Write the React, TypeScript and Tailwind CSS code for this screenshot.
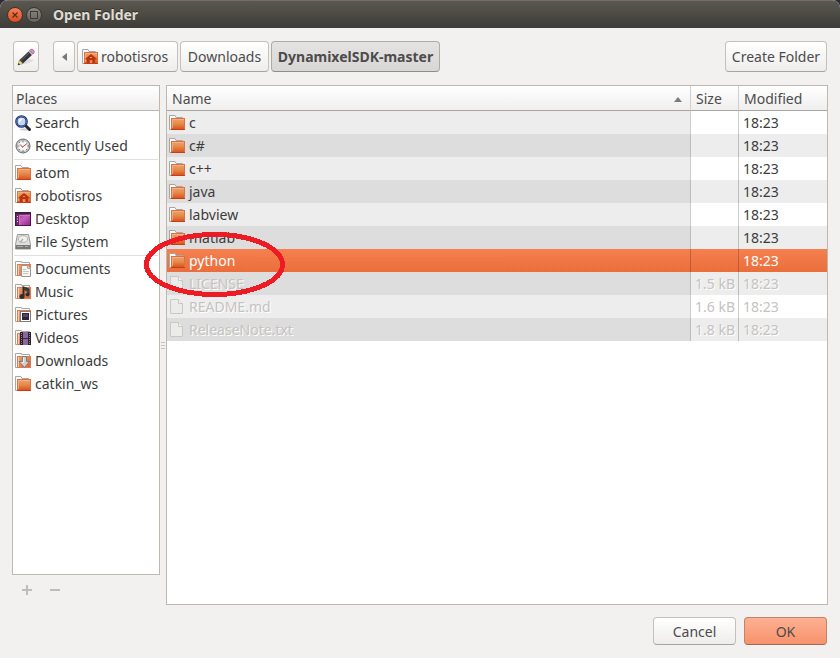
import type { ReactNode } from 'react';

type IconProps = { kind: string };

const FolderBase = ({ children }: { children?: ReactNode }) => (
  <>
    <path d="M.5 14.500V.5h5.500l1 2h6.500v3h-11v9z" fill="#fff" stroke="#a9a7a4" />
    <rect x="2.500" y="3.500" width="13" height="11" fill="url(#folderFill)" stroke="#dc7146" />
    <path d="M3.500 13V4.500H15" fill="none" stroke="#f3b88e" strokeOpacity=".7" />
    <path d="M2 14.500h14" stroke="#c43f16" />
    {children}
  </>
);

const StackBase = ({ children }: { children?: ReactNode }) => (
  <>
    <path d="M.5 14.500V.5h6v1h8v3h-10v10z" fill="#fff" stroke="#a9a7a4" />
    <rect x="2.500" y="3.500" width="13" height="11" fill="url(#stackFill)" stroke="#dc7b55" />
    <path d="M3.500 4v10" stroke="#f7cdb0" />
    {children}
  </>
);

const drawings: Record<string, ReactNode> = {
  folder: <FolderBase />,
  home: (
    <FolderBase>
      <path d="M3.500 9.500 9 5l5.500 4.500v1H13v3.500h-2.500v-3h-3v3H5v-3.500H3.500z" fill="#b93512" />
      <path d="M8 8h2v1H8zM8 11.500h2V14H8z" fill="#f0905a" />
    </FolderBase>
  ),
  search: (
    <>
      <ellipse cx="10" cy="14.500" rx="5" ry="1" fill="#ccc" />
      <path d="m10.500 10.500 4 4" stroke="#252525" strokeWidth="3" strokeLinecap="round" />
      <circle cx="6.500" cy="6.500" r="5.200" fill="#c7d4ed" stroke="#1d3277" strokeWidth="2.300" />
      <circle cx="6.500" cy="6.500" r="5.200" fill="none" stroke="#5279bf" strokeWidth=".8" />
      <path d="M4 6q0-3 4-2.500L4 8z" fill="#fff" />
    </>
  ),
  recent: (
    <>
      <circle cx="8" cy="8" r="7" fill="#d4d4d1" stroke="#666" />
      <circle cx="8" cy="8" r="5.500" fill="#f6f6f6" stroke="#aaa" strokeWidth=".8" />
      <path d="M8 2.500v2M8 12v2M2.500 8h2M12 8h2M4 4l1 1M12 12l-1-1M4 12l1-1" stroke="#777" strokeWidth=".9" />
      <path d="M7.500 9 5 6.500" stroke="#555" strokeWidth="1" />
      <path d="m7 9.500 5-4" stroke="#e23a30" strokeWidth="1" />
    </>
  ),
  desktop: (
    <>
      <rect x=".5" y="1.500" width="15" height="13" fill="url(#desktopFill)" stroke="#4b1549" />
      <path d="M1 2.500h14" stroke="#38233a" strokeWidth="2" />
      <path d="M1 4h3v10H1z" fill="#6d2b6b" />
      <path d="M2 5.500h1M2 8h1M2 10.500h1" stroke="#efd5ef" strokeWidth="1.200" />
      <path d="M4.500 4.500H15M4.500 4v10" stroke="#d777cd" strokeWidth=".8" />
    </>
  ),
  drive: (
    <>
      <path d="M2.500.5h11l2 10v4.500H.5v-4.500z" fill="#dededc" stroke="#999894" />
      <path d="M1 11h14v4H1z" fill="#777773" />
      <path d="M2 12.500h6M10 12.500h3" stroke="#a9a9a5" />
      <ellipse cx="8" cy="5" rx="4.500" ry="3.300" fill="#f1f1f0" stroke="#b5b5b1" />
      <path d="M8 5 5 8.500" stroke="#acaca8" strokeWidth="1.300" />
    </>
  ),
  documents: (
    <StackBase>
      <path d="M6.500 4.500h6l3 3v8h-9z" fill="#f5f5f3" stroke="#969692" />
      <path d="M12.500 4.500v3h3" fill="#ddd" stroke="#aaa" />
      <path d="M8 8.500h3M8 10.500h6M8 12.500h5" stroke="#c5c5c1" />
    </StackBase>
  ),
  music: (
    <StackBase>
      <path d="M8.500 12V3.500l5 2v5" fill="none" stroke="#292d2e" strokeWidth="2" />
      <path d="m9 3 5 3v3L9 6z" fill="#3c4041" />
      <circle cx="7" cy="12.500" r="2.500" fill="#2d3031" />
      <circle cx="12.500" cy="10.500" r="2" fill="#2d3031" />
    </StackBase>
  ),
  pictures: (
    <StackBase>
      <rect x="5.500" y="4.500" width="10" height="10" fill="#fff" stroke="#7d7d79" />
      <path d="M7 6h7v7H7z" fill="#30243b" />
      <path d="M8 7h5v3H8z" fill="#51466a" />
    </StackBase>
  ),
  videos: (
    <StackBase>
      <path d="M5 2h11v13H5z" fill="#29232b" />
      <path d="M8 2h5v13H8z" fill="#8a669b" />
      <path d="M8 8.500h5" stroke="#3c2b43" />
      <path d="M6.500 3v11M14.500 3v11" stroke="#8d8591" strokeDasharray="1 1" />
    </StackBase>
  ),
  downloads: (
    <StackBase>
      <path d="M7.500 3.500h4v5h3L9.500 14.500l-5.500-6h3.500z" fill="#d0d0cd" stroke="#7c7d79" />
      <path d="M8.500 4.500v5h-2" stroke="#eee" fill="none" />
    </StackBase>
  ),
  file: (
    <>
      <path d="M1.500.5h8l4 4v10h-12z" fill="#ebebea" stroke="#c9c8c6" />
      <path d="M9.500.5v4h4" fill="#f3f3f2" stroke="#c9c8c6" />
    </>
  ),
};

function Icon({ kind }: IconProps) {
  return (
    <svg className="size-4 shrink-0" viewBox="0 0 16 16" aria-hidden="true">
      {drawings[kind]}
    </svg>
  );
}

function Gradients() {
  return (
    <svg className="absolute size-0" aria-hidden="true">
      <defs>
        <linearGradient id="folderFill" x1="0" y1="0" x2="0" y2="1">
          <stop offset="0" stopColor="#eda272" />
          <stop offset=".45" stopColor="#e68d4a" />
          <stop offset="1" stopColor="#db4f1f" />
        </linearGradient>
        <linearGradient id="stackFill" x1="0" y1="0" x2="1" y2="1">
          <stop offset="0" stopColor="#f0a172" />
          <stop offset="1" stopColor="#e0602f" />
        </linearGradient>
        <linearGradient id="desktopFill" x1="0" y1="0" x2="1" y2="1">
          <stop offset="0" stopColor="#8d2f87" />
          <stop offset=".5" stopColor="#c560bb" />
          <stop offset="1" stopColor="#8b2685" />
        </linearGradient>
      </defs>
    </svg>
  );
}

const placeGroups = [
  [
    ['search', 'Search'],
    ['recent', 'Recently Used'],
  ],
  [
    ['folder', 'atom'],
    ['home', 'robotisros'],
    ['desktop', 'Desktop'],
    ['drive', 'File System'],
  ],
  [
    ['documents', 'Documents'],
    ['music', 'Music'],
    ['pictures', 'Pictures'],
    ['videos', 'Videos'],
    ['downloads', 'Downloads'],
    ['folder', 'catkin_ws'],
  ],
];

const files = [
  { name: 'c' },
  { name: 'c#' },
  { name: 'c++' },
  { name: 'java' },
  { name: 'labview' },
  { name: 'matlab' },
  { name: 'python', selected: true },
  { name: 'LICENSE', size: '1.5 kB' },
  { name: 'README.md', size: '1.6 kB' },
  { name: 'ReleaseNote.txt', size: '1.8 kB' },
];

const button =
  'flex items-center rounded border border-[#c5c0bb] border-b-[#a8a39e] bg-linear-to-b from-white to-[#eeedeb] whitespace-nowrap';
const headerFill = 'bg-linear-to-b from-white to-[#efeeed]';
const headerCell = 'border-b border-b-[#a8a5a2] pt-[2px] pb-0 pl-[5px] font-normal';

function rowStyle(index: number, file: (typeof files)[number]) {
  if (file.selected) return 'bg-linear-to-b from-[#f5804f] to-[#ea6e3b] text-white';
  const stripe = index % 2 ? 'bg-[#ededed]' : 'bg-white';
  return file.size ? `${stripe} text-[#c5c2bf] [text-shadow:1px_1px_0_#fff]` : stripe;
}

export default function App() {
  return (
    <div className="bg-[#2c2b35]">
      <Gradients />
      <div className="flex min-h-screen flex-col overflow-hidden rounded-t-lg bg-[#f2f1f0] font-['Noto_Sans',sans-serif] text-sm leading-5 text-[#4c4c4c]">
        <header className="flex h-7 items-center gap-[3px] border-t border-[#706e66] bg-linear-to-b from-[#5a5850] to-[#3d3c37] px-[7px] text-[#dfdbd2]">
          <button aria-label="Close" className="flex size-4 items-center justify-center rounded-full border border-[#3b3732] bg-linear-to-b from-[#f78055] to-[#dd4b1d]">
            <svg className="size-2" viewBox="0 0 8 8"><path d="m1.500 1.500 5 5m0-5-5 5" stroke="#54301f" strokeWidth="1.300" /></svg>
          </button>
          <button aria-label="Maximize" className="flex size-4 items-center justify-center rounded-full border border-[#383732] bg-linear-to-b from-[#8a8880] to-[#66645d]">
            <span className="size-2 border border-[#3b3a35]" />
          </button>
          <h1 className="ml-2 font-bold [text-shadow:0_-1px_0_#302f2b]">Open Folder</h1>
        </header>

        <nav className="flex px-[13px] pt-[13px] pb-[13px]">
          <button aria-label="Type a file name" className={`${button} mr-[14px] h-[31px] w-[26px] justify-center`}>
            <svg className="size-5 shrink-0" viewBox="0 0 20 20">
              <path d="M6 17q8 0 12-4l-5-1z" fill="#ddd" />
              <path d="m2 18 1.500-5 3.500 3.500z" fill="#ecdf83" stroke="#8d854b" strokeWidth=".6" />
              <path d="m2 18 .6-2 1.400 1.400z" fill="#111" />
              <path d="m3.500 13 9-8.500L16 8l-9 8.500z" fill="#34363a" />
              <path d="m5 13.500 8.500-8" stroke="#66686b" strokeWidth="1" />
              <path d="m12.500 4.500 1.500-1.500 3.500 3.500L16 8z" fill="#bbb" />
              <path d="m13.500 3.500 1-1q1.500-1 3 .5t.5 3l-1 1z" fill="#d890c4" stroke="#8e5b80" strokeWidth=".6" />
            </svg>
          </button>
          <div className="flex gap-[2px]">
            <button aria-label="Back" className={`${button} h-[31px] w-[22px] justify-center`}>
              <svg className="h-2 w-[5px]" viewBox="0 0 5 8"><path d="M5 0v8L0 4z" fill="#777" /></svg>
            </button>
            <button className={`${button} h-[31px] w-[101px] gap-[3px] px-1`}>
              <Icon kind="home" />
              robotisros
            </button>
            <button className={`${button} h-[31px] w-[89px] justify-center`}>Downloads</button>
            <button className="h-[31px] w-[169px] rounded border border-[#aeaaa6] border-b-[#908c88] bg-linear-to-b from-[#e5e3e2] to-[#d9d7d5] font-bold whitespace-nowrap">
              DynamixelSDK-master
            </button>
          </div>
          <button className={`${button} ml-auto h-[31px] w-[102px] justify-center`}>Create Folder</button>
        </nav>

        <main className="relative flex flex-1 px-3">
          <aside className="flex w-[148px] flex-col">
            <section className="flex-1 border border-[#bfb8b1] bg-white" aria-label="Places">
              <h2 className={`h-[25px] border-b border-[#bbb7b3] px-[3px] pt-[3px] ${headerFill}`}>Places</h2>
              {placeGroups.map((group, index) => (
                <ul key={index} className={index ? 'pt-1' : ''}>
                  {index > 0 && <li className="mx-px -mt-[2px] mb-px h-px bg-[#dfdfdf]" aria-hidden="true" />}
                  {group.map(([kind, label]) => (
                    <li key={label}>
                      <button className="flex h-[23px] w-full items-center gap-1 px-[2px] text-left text-[#3c3c3c]">
                        <Icon kind={kind} />
                        {label}
                      </button>
                    </li>
                  ))}
                </ul>
              ))}
            </section>
            <div className="flex h-[30px] items-center gap-2 px-[5px]">
              <button aria-label="Add bookmark" className="flex size-5 items-center justify-center">
                <svg className="size-[10px]" viewBox="0 0 10 10"><path d="M5 0v10M0 5h10" stroke="#bfbdbb" strokeWidth="2" /></svg>
              </button>
              <button aria-label="Remove bookmark" className="flex size-5 items-center justify-center">
                <svg className="size-[10px]" viewBox="0 0 10 10"><path d="M0 5h10" stroke="#bfbdbb" strokeWidth="2" /></svg>
              </button>
            </div>
          </aside>

          <div className="flex w-[6px] flex-col items-center justify-center gap-[2px]">
            <span className="h-px w-1 bg-[#c5c2bf]" />
            <span className="h-px w-1 bg-[#c5c2bf]" />
            <span className="h-px w-1 bg-[#c5c2bf]" />
          </div>

          <section className="flex-1 border border-[#bfb8b1] bg-white" aria-label="Files">
            <table className="w-full table-fixed border-separate border-spacing-0">
              <colgroup>
                <col />
                <col className="w-12" />
                <col className="w-[89px]" />
              </colgroup>
              <thead>
                <tr className={`h-[25px] text-left ${headerFill}`}>
                  <th className={`${headerCell} pr-2`}>
                    <div className="flex items-center justify-between">
                      Name
                      <svg className="h-[5px] w-2" viewBox="0 0 8 5"><path d="m4 0 4 5H0z" fill="#7b7b7b" /></svg>
                    </div>
                  </th>
                  <th className={`${headerCell} border-l border-l-[#d2d0ce]`}>Size</th>
                  <th className={`${headerCell} border-l border-l-[#d2d0ce]`}>Modified</th>
                </tr>
              </thead>
              <tbody className="text-[#3c3c3c]">
                {files.map((file, index) => (
                  <tr key={file.name} className={`h-[23px] ${rowStyle(index, file)}`}>
                    <td className={`px-[2px] py-0 ${file.selected ? '' : index % 2 ? 'bg-[#dddddd]' : 'bg-[#ededed]'}`}>
                      <div className="flex items-center gap-1">
                        <Icon kind={file.size ? 'file' : 'folder'} />
                        {file.name}
                      </div>
                    </td>
                    <td className="border-l border-black/20 py-0 pr-[3px] text-right whitespace-nowrap">{file.size}</td>
                    <td className="border-l border-black/20 py-0 pl-1">18:23</td>
                  </tr>
                ))}
              </tbody>
            </table>
          </section>

          <svg className="pointer-events-none absolute top-[146px] left-[142px] h-[68px] w-[144px]" viewBox="0 0 144 68" aria-hidden="true">
            <ellipse cx="72.500" cy="33.500" rx="68" ry="30" fill="none" stroke="#ed1c24" strokeWidth="5" shapeRendering="crispEdges" />
          </svg>
        </main>

        <footer className="flex justify-end gap-2 px-[13px] pt-3 pb-[13px]">
          <button className={`${button} h-7 w-[83px] justify-center pt-px`}>Cancel</button>
          <button className="h-7 w-[83px] rounded border border-[#c4826b] border-b-[#9d6b59] bg-linear-to-b from-[#fdb092] to-[#f8926b] pt-px">OK</button>
        </footer>
      </div>
    </div>
  );
}
